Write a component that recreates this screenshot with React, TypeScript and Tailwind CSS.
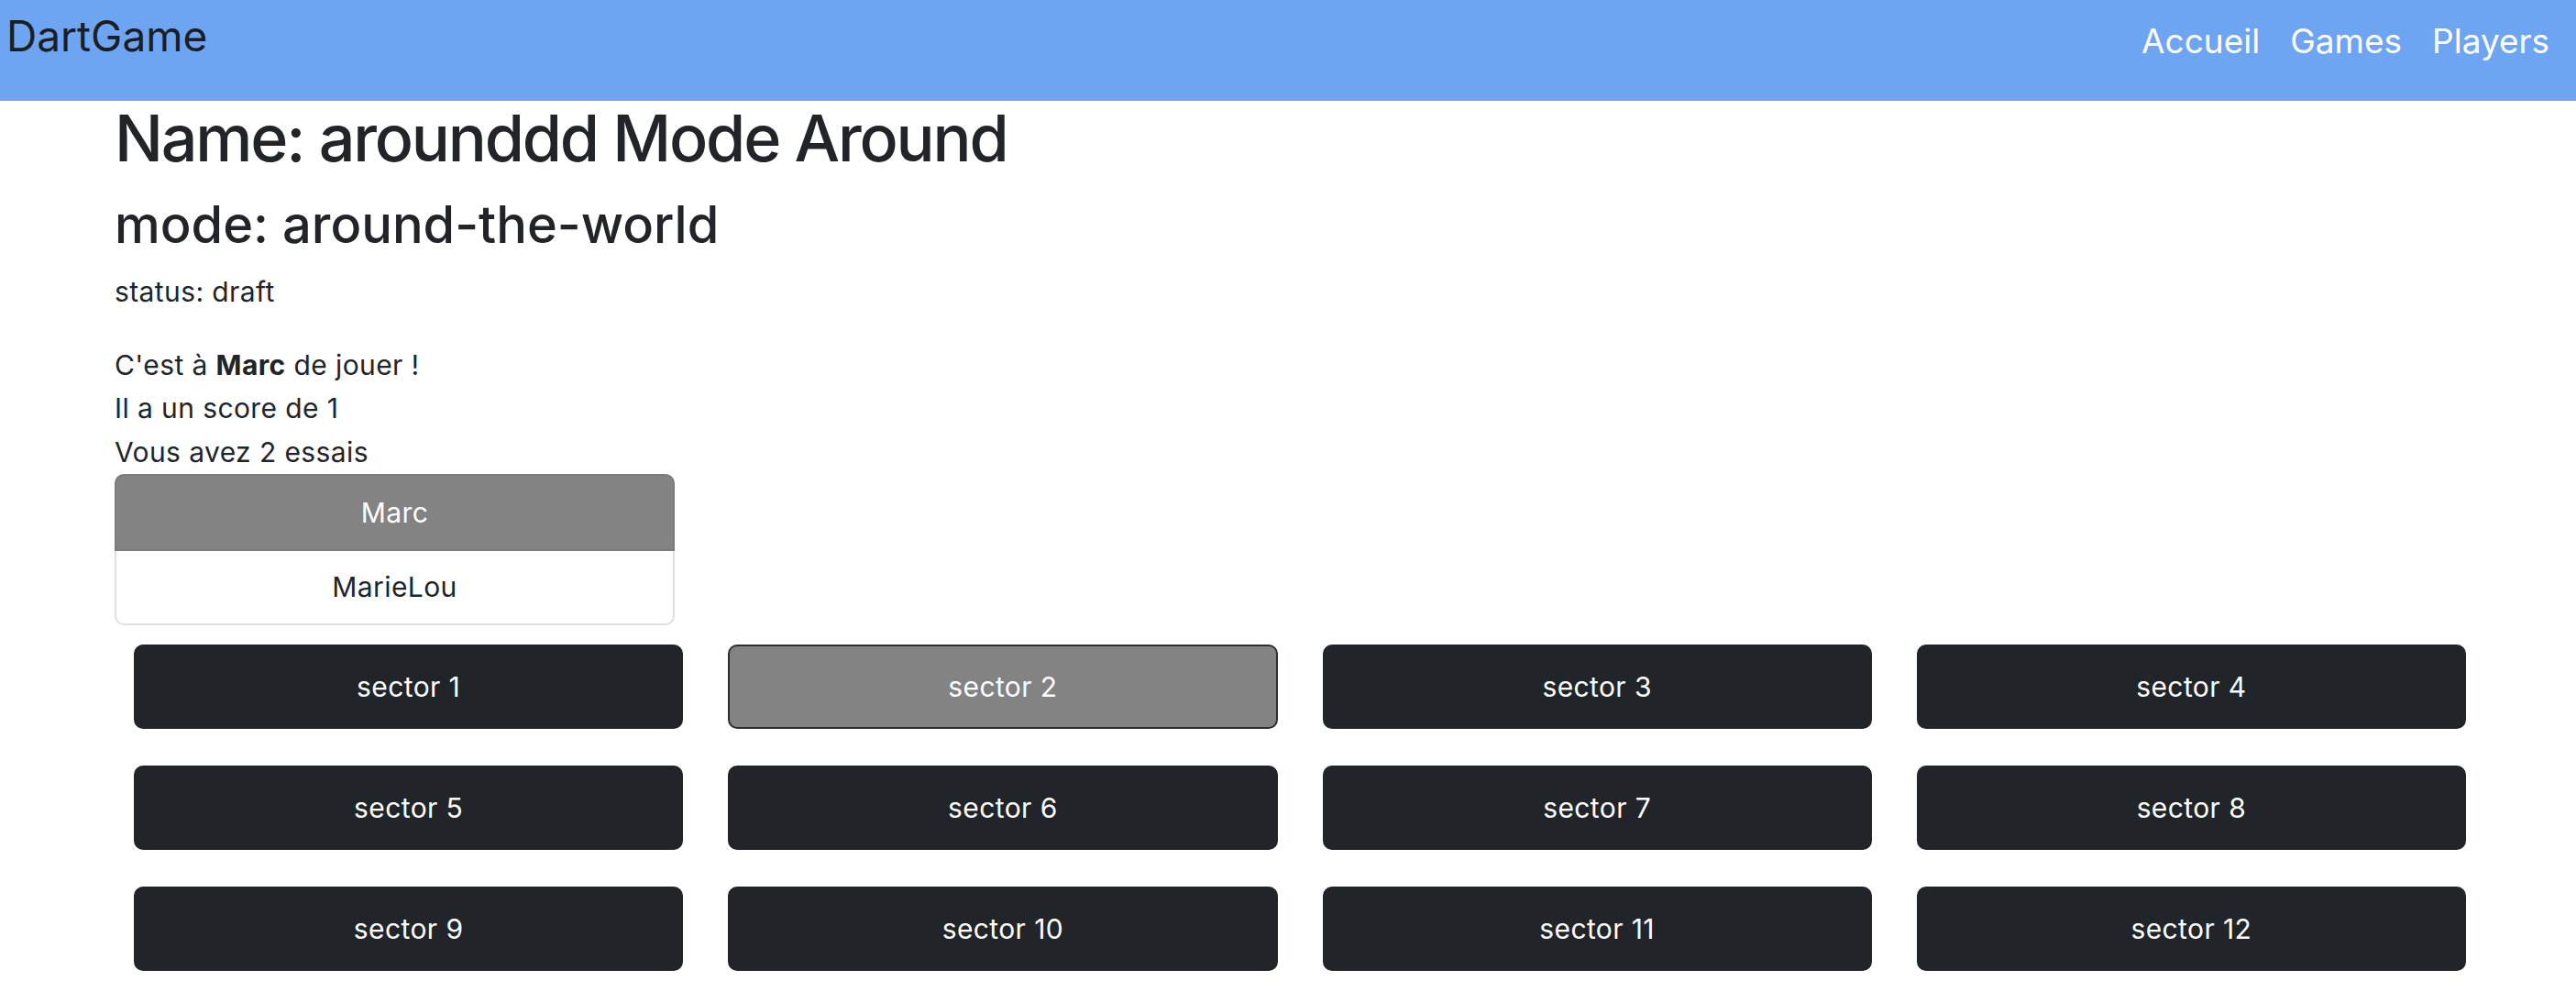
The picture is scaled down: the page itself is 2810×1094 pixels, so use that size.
import React from "react";

const sectors = Array.from({ length: 12 }, (_, i) => i + 1);

export default function App() {
  return (
    <div className="min-h-screen bg-white text-[#212529] font-['Inter','Liberation_Sans',sans-serif]">
      <nav className="h-[110px] bg-[#6ea5f2] flex items-start justify-between">
        <a className="ml-[7px] mt-[16px] text-[46px] leading-none text-[#1b1f24]">DartGame</a>
        <div className="mr-[29px] mt-[26px] flex gap-[33px] text-[37px] leading-none text-white">
          <a>Accueil</a>
          <a>Games</a>
          <a>Players</a>
        </div>
      </nav>
      <main className="pl-[125px]">
        <h1 className="mt-[6px] text-[70px] leading-none font-medium tracking-[-2.2px]">Name: arounddd Mode Around</h1>
        <h2 className="mt-[31px] text-[56px] leading-none font-medium">mode: around-the-world</h2>
        <div className="tracking-[0.4px]">
          <p className="mt-[22px] text-[30px] leading-[47.5px]">status: draft</p>
          <div className="mt-[32px] text-[30px] leading-[47.5px]">
            <div>
              C'est à <b className="font-bold">Marc</b> de jouer !
            </div>
            <div>Il a un score de 1</div>
            <div>Vous avez 2 essais</div>
          </div>
          <div className="w-[611px] text-[30px]">
            <div className="h-[84px] flex items-center justify-center bg-[#838383] border-2 border-[#7a7a7a] rounded-t-[10px] text-white">
              Marc
            </div>
            <div className="h-[81px] flex items-center justify-center bg-white border-2 border-t-0 border-[#dfdfdf] rounded-b-[10px]">
              MarieLou
            </div>
          </div>
          <div className="mt-[21px] ml-[21px] w-[2544px] grid grid-cols-4 gap-x-[49px] gap-y-[40px]">
            {sectors.map((n) => (
              <button
                key={n}
                className={
                  n === 2
                    ? "h-[92px] rounded-[10px] bg-[#838383] border-2 border-[#2b2f33] text-white text-[30px] tracking-[0.4px] flex items-center justify-center"
                    : "h-[92px] rounded-[10px] bg-[#212529] border-2 border-[#212529] text-white text-[30px] tracking-[0.4px] flex items-center justify-center"
                }
              >
                sector {n}
              </button>
            ))}
          </div>
        </div>
      </main>
    </div>
  );
}
